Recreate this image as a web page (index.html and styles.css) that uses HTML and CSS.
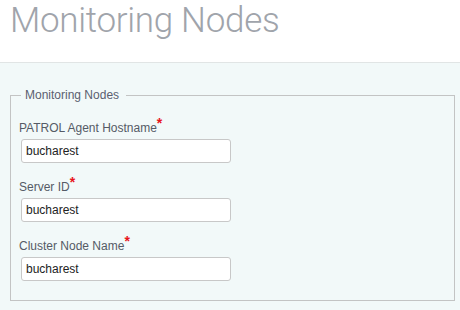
FILE: index.html
```html
<!DOCTYPE html>
<html lang="en">
<head>
  <meta charset="UTF-8">
  <title>Monitoring Nodes</title>
  <link rel="stylesheet" href="styles.css">
</head>
<body>
  <header class="page-header">
    <h1>Monitoring Nodes</h1>
  </header>

  <section class="panel">
    <fieldset class="group">
      <legend>Monitoring Nodes</legend>

      <div class="field">
        <label for="agent-host">PATROL Agent Hostname<span class="req">*</span></label>
        <input id="agent-host" type="text" value="bucharest">
      </div>
      <div class="field">
        <label for="server-id">Server ID<span class="req">*</span></label>
        <input id="server-id" type="text" value="bucharest">
      </div>
      <div class="field">
        <label for="cluster-node">Cluster Node Name<span class="req">*</span></label>
        <input id="cluster-node" type="text" value="bucharest">
      </div>
    </fieldset>
  </section>
</body>
</html>
```

FILE: styles.css
```css
body {
  margin: 0;
  background: #fff;
  font-family: "Liberation Sans", Arial, sans-serif;
  font-size: 12px;
  color: #555b66;
}

.page-header {
  box-sizing: border-box;
  height: 63px;
  padding-top: 3px;
  border-bottom: 1px solid #e1e5e5;
}

.page-header h1 {
  margin: 0;
  padding-left: 10px;
  font-family: Roboto, sans-serif;
  font-weight: 300;
  font-size: 35px;
  line-height: 35px;
  letter-spacing: -0.3px;
  color: #a0a4ab;
}

.panel {
  background: #f2f9f9;
  padding: 24px 5px 9px 10px;
}

.group {
  margin: 0;
  padding: 0 8px 19px 8px;
  border: 1px solid #c3c4c4;
}

.group legend {
  margin-left: 2px;
  padding: 0 7px 0 4px;
  line-height: 16px;
  color: #5b6070;
}

.field {
  display: flex;
  flex-direction: column;
  align-items: flex-start;
  margin-top: 16px;
}

.field:first-of-type {
  margin-top: 17px;
}

.field label {
  line-height: 16px;
}

.req {
  color: #e8141b;
  font-weight: bold;
  font-size: 14px;
  line-height: 0;
  vertical-align: 4px;
}

.field input {
  box-sizing: border-box;
  width: 210px;
  height: 24px;
  margin: 3px 0 0 2px;
  padding: 0 4px;
  border: 1px solid #c8c8c8;
  border-radius: 3px;
  background: #fff;
  font-family: "Liberation Sans", Arial, sans-serif;
  font-size: 12px;
  color: #222;
  outline: none;
}
```
